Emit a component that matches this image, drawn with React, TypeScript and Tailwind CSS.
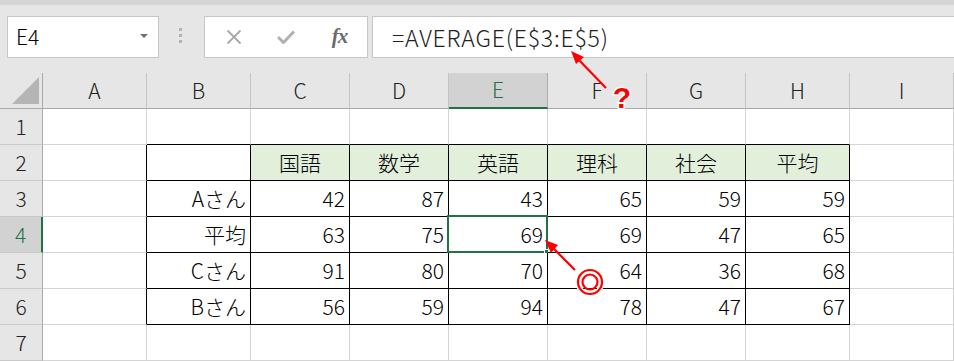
import React from 'react';

const cols = [
  { key: 'A', w: 'w-[104px]' },
  { key: 'B', w: 'w-[104px]' },
  { key: 'C', w: 'w-[99px]' },
  { key: 'D', w: 'w-[99px]' },
  { key: 'E', w: 'w-[99px]' },
  { key: 'F', w: 'w-[99px]' },
  { key: 'G', w: 'w-[99px]' },
  { key: 'H', w: 'w-[104px]' },
  { key: 'I', w: 'w-[104px]' },
];

const subjects = ['国語', '数学', '英語', '理科', '社会', '平均'];

const data: (string | number)[][] = [
  ['Aさん', 42, 87, 43, 65, 59, 59],
  ['平均', 63, 75, 69, 69, 47, 65],
  ['Cさん', 91, 80, 70, 64, 36, 68],
  ['Bさん', 56, 59, 94, 78, 47, 67],
];

const font = { fontFamily: '"Noto Sans CJK JP", "Noto Sans", sans-serif' };

function cellBorder(row: number, col: number) {
  // table B2:H6 has black borders; col index 0 = A
  const inTable = row >= 2 && row <= 6 && col >= 1 && col <= 7;
  const rightBlack = inTable || (row >= 2 && row <= 6 && col === 0);
  const bottomBlack = inTable || (row === 1 && col >= 1 && col <= 7);
  return [
    rightBlack ? 'border-r-black' : 'border-r-[#d4d4d4]',
    bottomBlack ? 'border-b-black' : 'border-b-[#d4d4d4]',
  ].join(' ');
}

const Toolbar: React.FC = () => (
  <div className="h-[73px] bg-[#e6e6e6] relative">
    <div className="h-[5px] bg-[#d5d5d5]" />
    <div className="flex items-start pl-[7px] pt-[11px]">
      <div className="w-[152px] h-[42px] bg-white border border-[#c6c6c6] flex items-center justify-between pl-[8px] pr-[10px]">
        <span className="text-[21px] font-light text-black" style={font}>E4</span>
        <span className="w-0 h-0 border-l-[4px] border-r-[4px] border-t-[4px] border-l-transparent border-r-transparent border-t-[#6f6f6f] mt-[-2px]" />
      </div>
      <div className="ml-[20px] mt-[12px] flex flex-col gap-[3px]">
        <div className="w-[3px] h-[3px] bg-[#b3b3b3]" />
        <div className="w-[3px] h-[3px] bg-[#b3b3b3]" />
        <div className="w-[3px] h-[3px] bg-[#b3b3b3]" />
      </div>
      <div className="ml-[22px] w-[164px] h-[42px] bg-white border border-[#c6c6c6] flex items-center">
        <div className="w-[55px] flex justify-center pl-[2px]">
          <svg width="16" height="16" viewBox="0 0 16 16">
            <path d="M1.5 1.5 L14.5 14.5 M14.5 1.5 L1.5 14.5" stroke="#a8a8a8" strokeWidth="1.8" fill="none" />
          </svg>
        </div>
        <div className="w-[52px] flex justify-center">
          <svg width="18" height="14" viewBox="0 0 18 14">
            <path d="M1 7 L6.5 12.5 L17 1.5" stroke="#b0b0b0" strokeWidth="3" fill="none" />
          </svg>
        </div>
        <div className="w-[55px] flex justify-center">
          <span className="text-[21px] italic font-bold text-[#6a6a6a] tracking-[-1px]" style={{ fontFamily: '"Liberation Serif", serif' }}>fx</span>
        </div>
      </div>
      <div className="ml-[4px] flex-1 h-[42px] bg-white border border-r-0 border-[#c6c6c6] flex items-center pl-[19px]">
        <span className="text-[23px] font-light text-[#222] tracking-[0.8px]" style={font}>=AVERAGE(E$3:E$5)</span>
      </div>
    </div>
  </div>
);

const HeaderRow: React.FC = () => (
  <div className="flex h-[36px]">
    <div className="w-[43px] h-full bg-[#e6e6e6] border-r border-b border-[#a9a9a9] relative">
      <svg className="absolute left-[12px] top-[4px]" width="28" height="28" viewBox="0 0 28 28">
        <polygon points="0,27 27,0 27,27" fill="#b5b5b5" />
      </svg>
    </div>
    {cols.map((c) =>
      c.key === 'E' ? (
        <div key={c.key} className={`${c.w} h-full bg-[#d2d2d2] border-r border-r-[#ababab] border-b-2 border-b-[#217346] flex items-center justify-center text-[21px] font-light text-[#217346]`} style={font}>
          {c.key}
        </div>
      ) : (
        <div key={c.key} className={`${c.w} h-full bg-[#e6e6e6] border-r border-r-[#c4c4c4] border-b border-b-[#a9a9a9] flex items-center justify-center text-[21px] font-light text-[#222]`} style={font}>
          {c.key}
        </div>
      )
    )}
  </div>
);

function cellContent(row: number, col: number) {
  if (row === 2 && col >= 2 && col <= 7) return { text: subjects[col - 2], center: true, green: true };
  if (row >= 3 && row <= 6 && col >= 1 && col <= 7) return { text: String(data[row - 3][col - 1]), center: false, green: false };
  return { text: '', center: false, green: false };
}

const App: React.FC = () => {
  const rows = [1, 2, 3, 4, 5, 6, 7];
  return (
    <div className="w-[954px] h-[361px] overflow-hidden bg-white relative" style={font}>
      <Toolbar />
      <HeaderRow />
      {rows.map((r) => (
        <div key={r} className="flex h-[36px]">
          <div
            className={
              r === 4
                ? 'w-[43px] h-full bg-[#d2d2d2] border-r-2 border-r-[#217346] border-b border-b-[#c9c9c9] flex items-center justify-center text-[21px] font-light text-[#217346]'
                : 'w-[43px] h-full bg-[#e6e6e6] border-r border-r-[#a9a9a9] border-b border-b-[#c9c9c9] flex items-center justify-center text-[21px] font-light text-[#222]'
            }
          >
            {r}
          </div>
          {cols.map((c, ci) => {
            const content = cellContent(r, ci);
            const selected = r === 4 && c.key === 'E';
            return (
              <div
                key={c.key}
                className={`${c.w} h-full border-r border-b relative flex items-center text-[21px] font-light text-black ${cellBorder(r, ci)} ${
                  content.center ? 'justify-center' : 'justify-end pr-[4px]'
                } ${content.green ? 'bg-[#e2efda]' : 'bg-white'}`}
              >
                {content.text}
                {selected && (
                  <>
                    <div className="absolute left-[-2px] top-[-2px] right-[-1px] bottom-[-1px] border-2 border-[#217346]" />
                    <div className="absolute right-[-5px] bottom-[-5px] w-[8px] h-[8px] bg-[#217346] border border-white" />
                  </>
                )}
              </div>
            );
          })}
        </div>
      ))}

      <svg className="absolute left-0 top-0 pointer-events-none" width="954" height="361" viewBox="0 0 954 361">
        <line x1="606" y1="88" x2="577" y2="58" stroke="#ff0000" strokeWidth="2.2" />
        <polygon points="571,51 584,57 576,64" fill="#ff0000" />
        <text x="622" y="108" textAnchor="middle" fontSize="30" fontWeight="bold" fill="#ff0000" stroke="#ffffff" strokeWidth="3" paintOrder="stroke" style={{ fontFamily: '"Liberation Sans", sans-serif' }}>?</text>
        <line x1="575" y1="270" x2="550" y2="245" stroke="#ff0000" strokeWidth="2.2" />
        <polygon points="545,240 558,245 551,253" fill="#ff0000" />
        <circle cx="590" cy="282" r="12" fill="none" stroke="#ffffff" strokeWidth="5" />
        <circle cx="590" cy="282" r="12" fill="none" stroke="#ff0000" strokeWidth="2.2" />
        <circle cx="590" cy="282" r="7.5" fill="none" stroke="#ff0000" strokeWidth="2.2" />
      </svg>
    </div>
  );
};

export default App;
